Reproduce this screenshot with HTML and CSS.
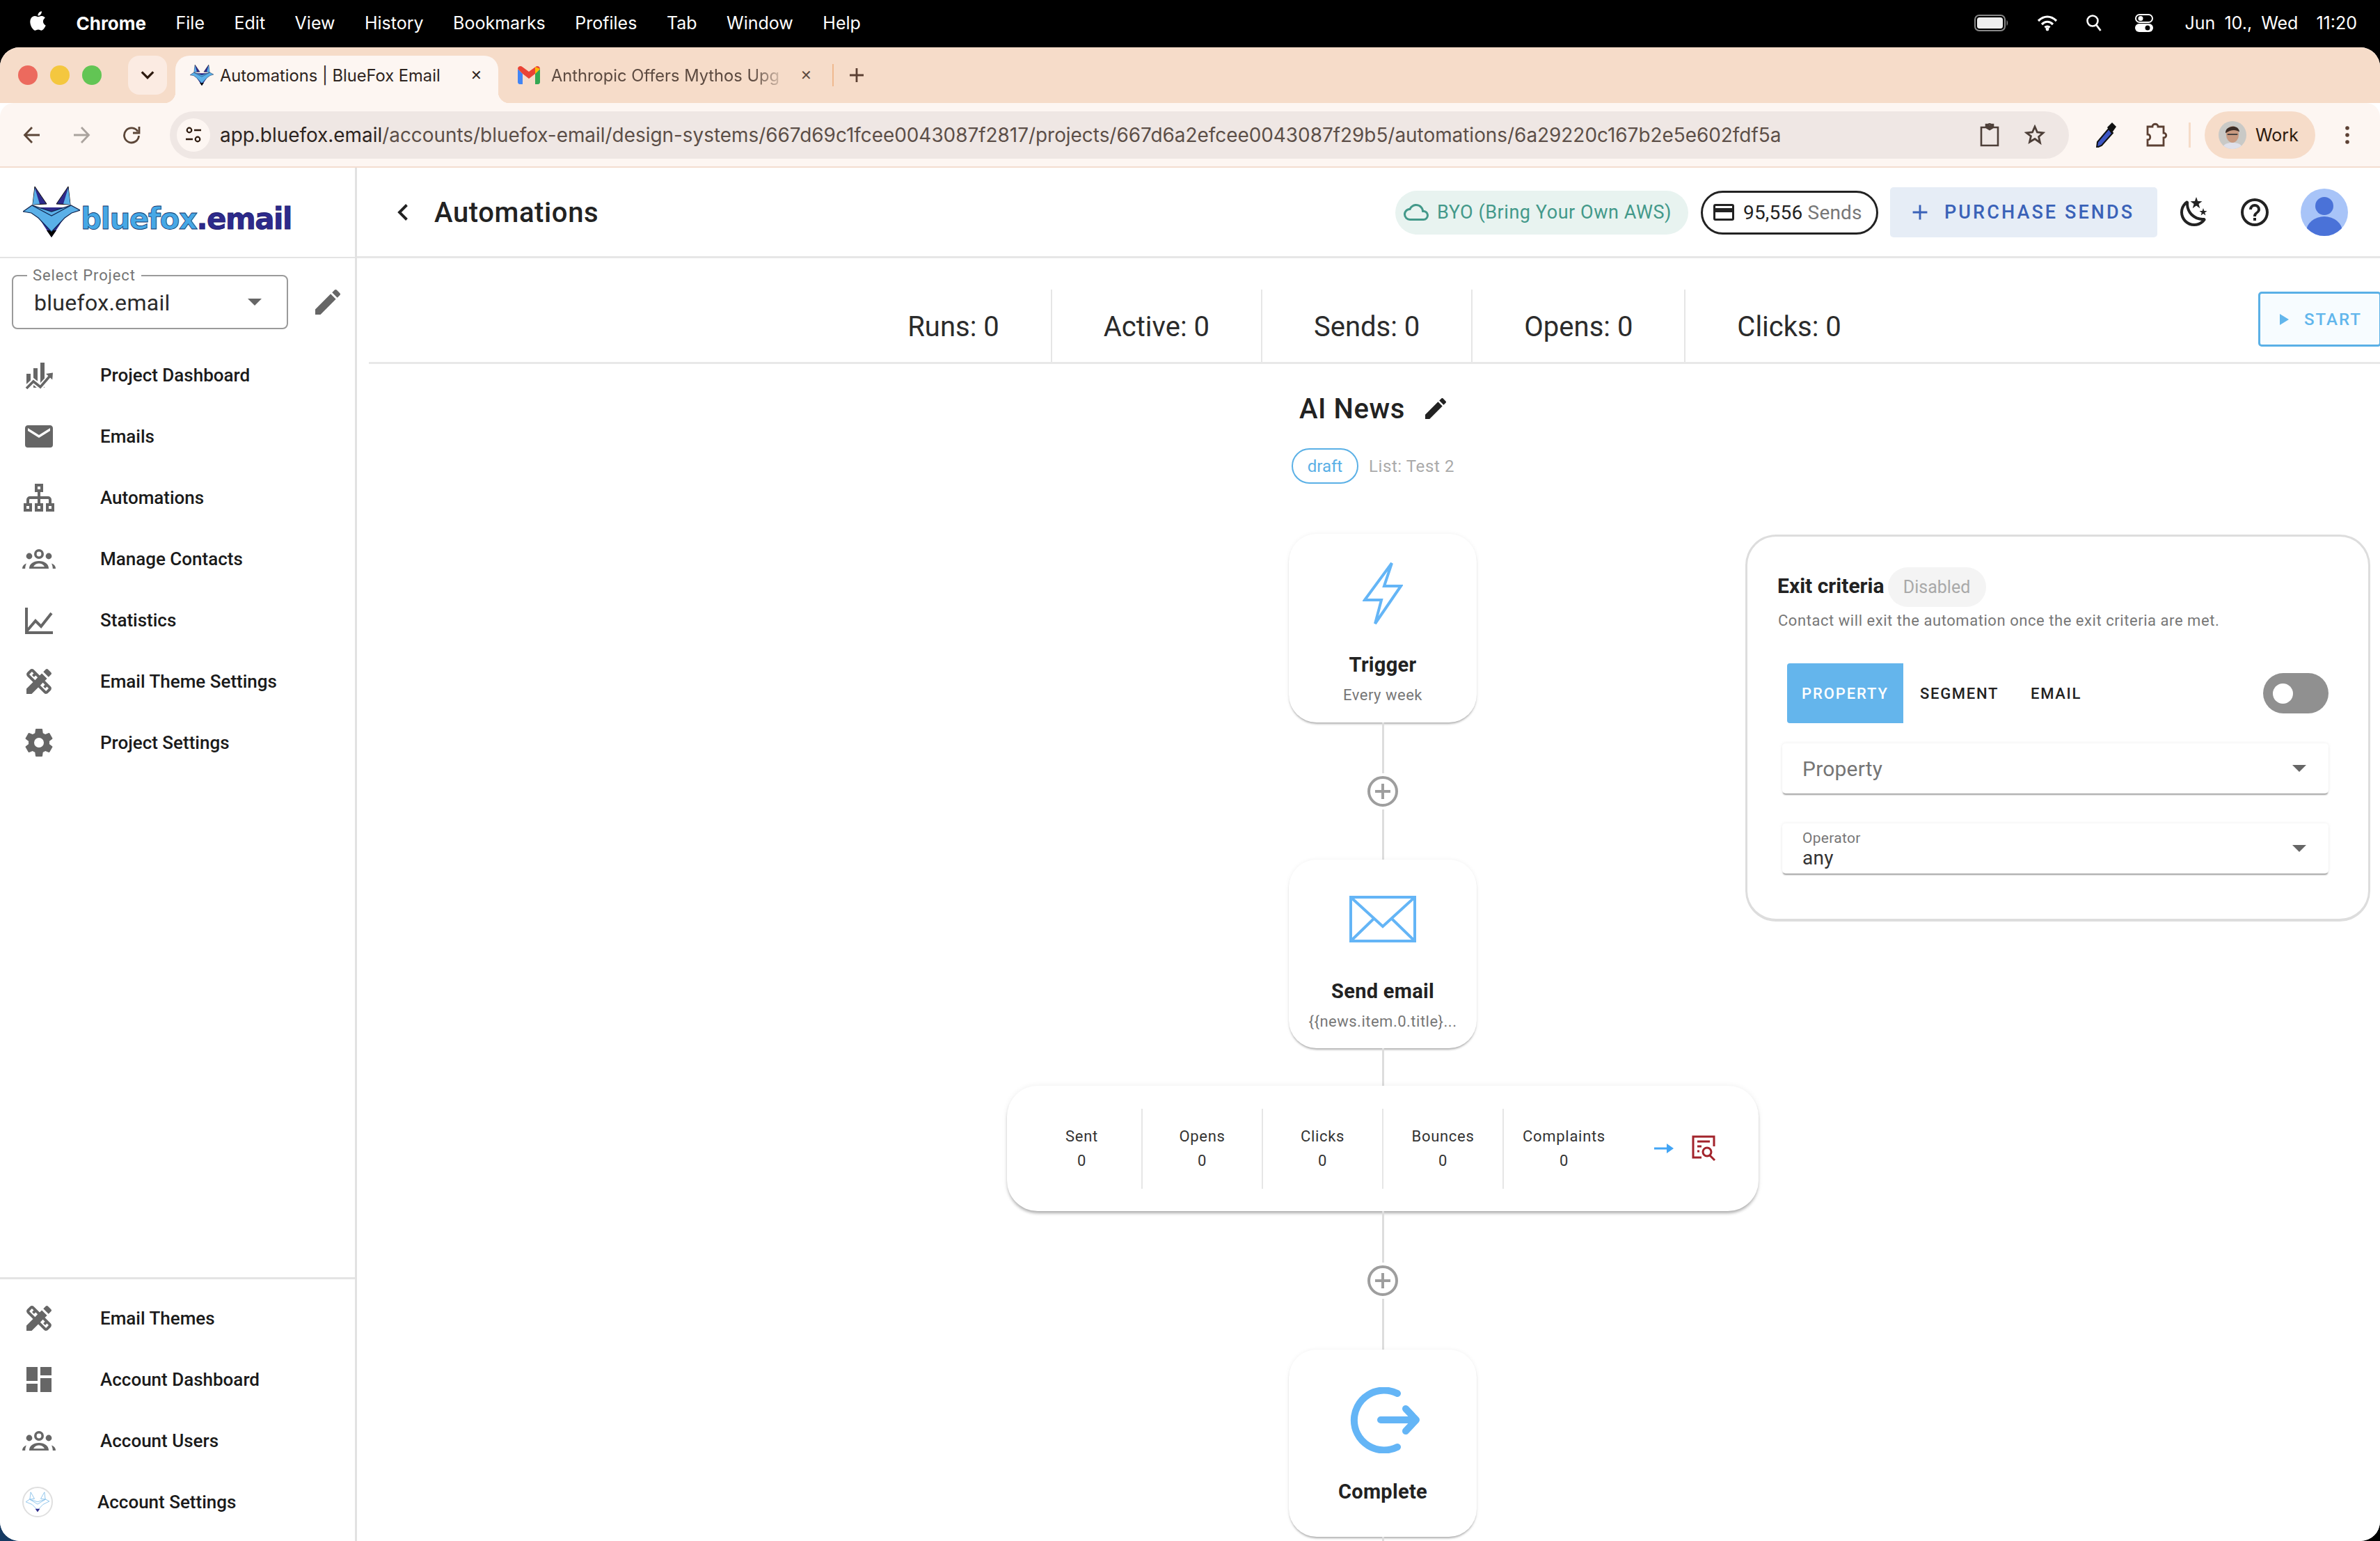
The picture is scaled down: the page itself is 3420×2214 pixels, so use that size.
FILE: index.html
```html
<!DOCTYPE html>
<html lang="en">
<head>
  <meta charset="UTF-8">
  <title>Automations | BlueFox Email</title>
  <link rel="stylesheet" href="styles.css">
</head>
<body>
  <svg class="defs" width="0" height="0">
    <symbol id="fox" viewBox="0 0 82 73">
      <polygon points="13,30 41,73 69,30" fill="#2d2a8c"/>
      <polygon points="34,63 41,73 48,63" fill="#000"/>
      <polygon points="17,0 34,25 14,26" fill="#2d2a8c" stroke="#111" stroke-width="1"/>
      <polygon points="65,0 48,25 68,26" fill="#2d2a8c" stroke="#111" stroke-width="1"/>
      <polygon points="17,2 14,26 24,25" fill="#5ab0e8"/>
      <polygon points="65,2 68,26 58,25" fill="#5ab0e8"/>
      <polygon points="0,36 13,27 41,36 69,27 82,34 70,38 60,45 41,65 22,45 12,38" fill="#5ab0e8" stroke="#10254f" stroke-width="1.2"/>
      <polyline points="13,27 41,42 69,27" fill="none" stroke="#10254f" stroke-width="1.2"/>
    </symbol>
    <symbol id="i-themes" viewBox="0 0 24 24"><path d="M16.24 11.51l1.57-1.57-3.75-3.75-1.57 1.57-4.14-4.13c-.78-.78-2.05-.78-2.83 0l-1.9 1.9c-.78.78-.78 2.05 0 2.83l4.13 4.13L3 17.25V21h3.75l4.76-4.76 4.13 4.13c.95.95 2.23.6 2.83 0l1.9-1.9c.78-.78.78-2.05 0-2.83l-4.13-4.13zm-7.06-.44L5.04 6.94l1.89-1.9L8.2 6.31 7.02 7.5l1.41 1.41 1.19-1.19 1.45 1.45-1.89 1.9zm7.88 7.89l-4.13-4.13 1.9-1.9 1.45 1.45-1.19 1.19 1.41 1.41 1.19-1.19 1.27 1.27-1.9 1.9zm3.65-11.92c.39-.39.39-1.02 0-1.41l-2.34-2.34c-.47-.47-1.12-.29-1.41 0l-1.83 1.83 3.75 3.75 1.83-1.83z"/></symbol>
    <symbol id="i-group" viewBox="0 0 24 24"><path fill-rule="evenodd" d="M12 5a3.5 3.5 0 1 1 0 7 3.5 3.5 0 0 1 0-7zm0 1.8a1.7 1.7 0 1 0 0 3.4 1.7 1.7 0 0 0 0-3.4zM5 7.800a2.200 2.200 0 1 1 0 4.400 2.200 2.200 0 0 1 0-4.400zm14 0a2.200 2.200 0 1 1 0 4.400 2.200 2.200 0 0 1 0-4.400zM5 19c0-3.500 3-5.500 7-5.500s7 2 7 5.500zm3-1.400h8c-1-1.700-2.500-2.300-4-2.300s-3 .6-4 2.300zM0 19c0-1.700 1-3 3-3.700-.5 1-.9 2.300-.9 3.700zm24 0c0-1.700-1-3-3-3.700.5 1 .9 2.300.9 3.700z"/></symbol>
    <symbol id="i-pencil" viewBox="0 0 24 24"><path d="M20.71,7.04C21.1,6.65 21.1,6 20.71,5.63L18.37,3.29C18,2.9 17.35,2.9 16.96,3.29L15.12,5.12L18.87,8.87M3,17.25V21H6.75L17.81,9.93L14.06,6.18L3,17.25Z"/></symbol>
    <symbol id="i-plus-circle" viewBox="0 0 44 44"><circle cx="22" cy="22" r="20" fill="#fff" stroke="#9e9e9e" stroke-width="4"/><path d="M22 11v22M11 22h22" stroke="#9e9e9e" stroke-width="4"/></symbol>
    <symbol id="i-caret" viewBox="0 0 20 10"><path d="M0 0h20L10 10z"/></symbol>
  </svg>

  <!-- macOS menu bar -->
  <div class="menubar">
    <svg class="apple" viewBox="0 0 24 24"><path d="M18.71 19.5c-.83 1.24-1.71 2.45-3.05 2.47-1.34.03-1.77-.79-3.29-.79-1.53 0-2 .77-3.27.82-1.31.05-2.3-1.32-3.14-2.53C4.25 17 2.94 12.45 4.7 9.39c.87-1.52 2.43-2.48 4.12-2.51 1.28-.02 2.5.87 3.29.87.78 0 2.26-1.07 3.81-.91.65.03 2.47.26 3.64 1.98-.09.06-2.17 1.28-2.15 3.81.03 3.02 2.65 4.03 2.68 4.04-.03.07-.42 1.44-1.38 2.83M13 3.5c.73-.83 1.94-1.46 2.94-1.5.13 1.17-.34 2.35-1.04 3.19-.69.85-1.83 1.51-2.95 1.42-.15-1.15.41-2.35 1.05-3.11z"/></svg>
    <span class="menu-app">Chrome</span>
    <span>File</span><span>Edit</span><span>View</span><span>History</span><span>Bookmarks</span><span>Profiles</span><span>Tab</span><span>Window</span><span>Help</span>
    <div class="menu-status">
      <svg class="st-battery" viewBox="0 0 50 24"><rect x="1" y="1" width="43" height="22" rx="6" fill="none" stroke="#888" stroke-width="2"/><rect x="4" y="4" width="37" height="16" rx="3.500" fill="#eee"/><path d="M46.500 8c2 1 2 7 0 8z" fill="#888"/></svg>
      <svg class="st-wifi" viewBox="0 0 30 24"><path d="M2 9c8-8 18-8 26 0M7 14c5-5 11-5 16 0M11.500 18.500c2-2 5-2 7 0" fill="none" stroke="#fff" stroke-width="3.200"/><circle cx="15" cy="21" r="2.400" fill="#fff"/></svg>
      <svg class="st-search" viewBox="0 0 24 26"><circle cx="10" cy="10" r="7.500" fill="none" stroke="#fff" stroke-width="2.600"/><path d="M15.500 16l6 8" stroke="#fff" stroke-width="2.800"/></svg>
      <svg class="st-control" viewBox="0 0 26 26"><rect x="1" y="1" width="24" height="11" rx="5.500" fill="none" stroke="#fff" stroke-width="2"/><circle cx="8" cy="6.500" r="3.500" fill="#fff"/><rect x="0" y="14" width="26" height="12" rx="6" fill="#fff"/><circle cx="18" cy="20" r="3.500" fill="#000"/></svg>
      <span class="clock">Jun 10., Wed&nbsp;&nbsp;11:20</span>
    </div>
  </div>

  <div class="window">
    <!-- Abas do navegador -->
    <div class="tabbar">
      <div class="lights"><i class="red"></i><i class="yellow"></i><i class="green"></i></div>
      <div class="tab-search"><svg viewBox="0 0 24 24"><path d="M3 7l9 9 9-9" fill="none" stroke="#2d1a0e" stroke-width="3.500"/></svg></div>
      <div class="tab tab-active">
        <svg class="fav"><use href="#fox"/></svg>
        <span class="tab-title">Automations | BlueFox Email</span>
        <span class="tab-x">✕</span>
      </div>
      <div class="tab tab-other">
        <svg class="fav-m" viewBox="0 0 32 26"><path d="M0 4v19c0 1.500 1 3 3 3h4V11z" fill="#4285f4"/><path d="M32 4v19c0 1.500-1 3-3 3h-4V11z" fill="#34a853"/><path d="M0 4c0-3.500 4-5 6.500-3L16 8l9.500-7C28 -1 32 .5 32 4l-7 7-9 7-9-7z" fill="#ea4335"/><path d="M25 1l7 3-7 7z" fill="#fbbc04"/></svg>
        <span class="tab-title tab-fade">Anthropic Offers Mythos Upg</span>
        <span class="tab-x">✕</span>
      </div>
      <div class="tab-sep"></div>
      <svg class="tab-plus" viewBox="0 0 22 22"><path d="M11 1v20M1 11h20" stroke="#5c4033" stroke-width="2.800"/></svg>
    </div>

    <div class="toolbar">
      <svg class="nav-ic back" viewBox="0 0 26 26"><path d="M24 13H3M13 2L2.500 13 13 24" fill="none" stroke="#5c4638" stroke-width="2.800"/></svg>
      <svg class="nav-ic fwd" viewBox="0 0 26 26"><path d="M2 13h21M13 2l10.500 11L13 24" fill="none" stroke="#aaa39e" stroke-width="2.800"/></svg>
      <svg class="nav-ic reload" viewBox="0 0 26 26"><path d="M22 8a10.500 10.500 0 1 0 1.500 6" fill="none" stroke="#5c4638" stroke-width="2.800"/><path d="M24 1v9h-9" fill="none" stroke="#5c4638" stroke-width="2.800"/></svg>
      <div class="omnibox">
        <div class="site-info"><svg viewBox="0 0 26 26"><circle cx="7" cy="6" r="3.300" fill="none" stroke="#2d1a0e" stroke-width="2.200"/><path d="M14 6h10M2 19h10" stroke="#2d1a0e" stroke-width="2.400"/><circle cx="19" cy="19" r="3.300" fill="none" stroke="#2d1a0e" stroke-width="2.200"/></svg></div>
        <span class="url"><b>app.bluefox.email</b>/accounts/bluefox-email/design-systems/667d69c1fcee0043087f2817/projects/667d6a2efcee0043087f29b5/automations/6a29220c167b2e5e602fdf5a</span>
        <svg class="omni-ic" viewBox="0 0 28 34"><path d="M2 6h24v26H2zM9 6V2h3l2-1 2 1h3v4l-5 3z" fill="none" stroke="#4d3f38" stroke-width="2.600"/><path d="M9 6V3h10v3l-5 4z" fill="#4d3f38"/></svg>
        <svg class="omni-ic star" viewBox="0 0 30 30"><path d="M15 3l3.500 8 8.500.8-6.400 5.700 1.900 8.500L15 20.500 7.500 25l1.900-8.500L3 11.800l8.500-.8z" fill="none" stroke="#4d3f38" stroke-width="2.800"/></svg>
      </div>
      <svg class="ext-pen" viewBox="0 0 30 36"><path d="M19 9l6 6L9 33l-7 3 1-8z" fill="#3d56c4" stroke="#111" stroke-width="2"/><path d="M17 7l7-7 6 6-7 10z" fill="#111"/></svg>
      <svg class="ext-puzzle" viewBox="0 0 32 36"><path d="M3 6h7c0-5 8-5 8 0h8v9c5 0 5 7 0 7v11H3v-8c5 0 5-8 0-8z" fill="none" stroke="#5c4033" stroke-width="2.800"/></svg>
      <div class="tool-sep"></div>
      <div class="profile">
        <svg class="photo" viewBox="0 0 44 44"><defs><clipPath id="ph"><circle cx="22" cy="22" r="22"/></clipPath></defs><g clip-path="url(#ph)"><rect width="44" height="44" fill="#c9c9c6"/><path d="M6 44c1-8 8-10 16-10s15 2 16 10z" fill="#dfe0ea"/><ellipse cx="22" cy="21" rx="10" ry="13" fill="#c99a80"/><path d="M11 19c-1-12 21-15 22-2-5-4-14-4-22 2z" fill="#3c2d26"/><path d="M14 21h16" stroke="#3a3a3a" stroke-width="2"/></g></svg>
        <span>Work</span>
      </div>
      <svg class="tool-dots" viewBox="0 0 6 26"><circle cx="3" cy="3" r="2.800"/><circle cx="3" cy="13" r="2.800"/><circle cx="3" cy="23" r="2.800"/></svg>
    </div>

    <div class="app">
      <!-- Barra lateral -->
      <aside class="sidebar">
        <div class="logo">
          <svg class="logo-fox"><use href="#fox"/></svg>
          <span class="logo-text">bluefox<em>.email</em></span>
        </div>
        <div class="project-row">
          <div class="project-select">
            <span class="legend">Select Project</span>
            <span class="project-value">bluefox.email</span>
            <svg class="caret"><use href="#i-caret"/></svg>
          </div>
          <svg class="project-edit"><use href="#i-pencil"/></svg>
        </div>
        <nav class="nav">
          <a class="nav-item"><svg viewBox="0 0 24 24"><path d="M3 11h3v10H3zM8 7h3v14H8zM13 3h3v18h-3z"/><path d="M1 23l7-6.500 5 4L20 13" fill="none" stroke="#fff" stroke-width="4"/><path d="M3 21.500l5-5 5 4 6.500-7.500" fill="none" stroke="#666" stroke-width="1.800"/><path d="M17 11l5-.8-.4 5z"/></svg>Project Dashboard</a>
          <a class="nav-item"><svg viewBox="0 0 24 24"><path d="M20,8L12,13L4,8V6L12,11L20,6M20,4H4C2.89,4 2,4.89 2,6V18A2,2 0 0,0 4,20H20A2,2 0 0,0 22,18V6C22,4.89 21.1,4 20,4Z"/></svg>Emails</a>
          <a class="nav-item"><svg viewBox="0 0 24 24"><g fill="none" stroke="#666" stroke-width="2"><rect x="10" y="3" width="4" height="4"/><rect x="2" y="17" width="4" height="4"/><rect x="10" y="17" width="4" height="4"/><rect x="18" y="17" width="4" height="4"/><path d="M12 8v8M4 16v-2.500a1.500 1.500 0 0 1 1.500-1.500h13a1.500 1.500 0 0 1 1.500 1.500V16"/></g></svg>Automations</a>
          <a class="nav-item"><svg><use href="#i-group"/></svg>Manage Contacts</a>
          <a class="nav-item"><svg viewBox="0 0 24 24"><path d="M3 3v18h19" fill="none" stroke="#666" stroke-width="2"/><path d="M3.500 19.500l6-7 4 4L21 7" fill="none" stroke="#666" stroke-width="2"/></svg>Statistics</a>
          <a class="nav-item"><svg><use href="#i-themes"/></svg>Email Theme Settings</a>
          <a class="nav-item"><svg viewBox="0 0 24 24"><path d="M12,15.5A3.5,3.5 0 0,1 8.5,12A3.5,3.5 0 0,1 12,8.5A3.5,3.5 0 0,1 15.5,12A3.5,3.5 0 0,1 12,15.5M19.43,12.97C19.47,12.65 19.5,12.33 19.5,12C19.5,11.67 19.47,11.34 19.43,11L21.54,9.37C21.73,9.22 21.78,8.95 21.66,8.73L19.66,5.27C19.54,5.05 19.27,4.96 19.05,5.05L16.56,6.05C16.04,5.66 15.5,5.32 14.87,5.07L14.5,2.42C14.46,2.18 14.25,2 14,2H10C9.75,2 9.54,2.18 9.5,2.42L9.13,5.07C8.5,5.32 7.96,5.66 7.44,6.05L4.95,5.05C4.73,4.96 4.46,5.05 4.34,5.27L2.34,8.73C2.21,8.95 2.27,9.22 2.46,9.37L4.57,11C4.53,11.34 4.5,11.67 4.5,12C4.5,12.33 4.53,12.65 4.57,12.97L2.46,14.63C2.27,14.78 2.21,15.05 2.34,15.27L4.34,18.73C4.46,18.95 4.73,19.03 4.95,18.95L7.44,17.94C7.96,18.34 8.5,18.68 9.13,18.93L9.5,21.58C9.54,21.82 9.75,22 10,22H14C14.25,22 14.46,21.82 14.5,21.58L14.87,18.93C15.5,18.67 16.04,18.34 16.56,17.94L19.05,18.95C19.27,19.03 19.54,18.95 19.66,18.73L21.66,15.27C21.78,15.05 21.73,14.78 21.54,14.63L19.43,12.97Z"/></svg>Project Settings</a>
        </nav>
        <nav class="nav nav-bottom">
          <a class="nav-item"><svg><use href="#i-themes"/></svg>Email Themes</a>
          <a class="nav-item"><svg viewBox="0 0 24 24"><path d="M3 13h8V3H3v10zm0 8h8v-6H3v6zm10 0h8V11h-8v10zm0-18v6h8V3h-8z"/></svg>Account Dashboard</a>
          <a class="nav-item"><svg><use href="#i-group"/></svg>Account Users</a>
          <a class="nav-item nav-account">
            <span class="account-ring"><svg viewBox="0 0 82 73"><g fill="none" stroke="#7dbbe8" stroke-width="2"><polygon points="17,2 30,25 14,27"/><polygon points="65,2 52,25 68,27"/><polygon points="0,36 13,27 41,36 69,27 82,34 60,45 41,65 22,45"/><polyline points="13,27 41,44 69,27"/></g><polygon points="33,60 41,72 49,60" fill="#2d2a8c"/></svg></span>
            Account Settings
          </a>
        </nav>
      </aside>

      <main class="main">
        <header class="topbar">
          <svg class="back-chev" viewBox="0 0 24 24"><path d="M15 5l-7 7 7 7" fill="none" stroke="#222" stroke-width="2.600"/></svg>
          <h1 class="page-title">Automations</h1>
          <div class="byo"><svg viewBox="0 0 24 24"><path d="M19,18H6A4,4 0 0,1 2,14A4,4 0 0,1 6,10H6.71C7.37,7.69 9.5,6 12,6A5.5,5.5 0 0,1 17.5,11.5V12H19A3,3 0 0,1 22,15A3,3 0 0,1 19,18M19.35,10.03C18.67,6.59 15.64,4 12,4C9.11,4 6.6,5.64 5.35,8.03C2.34,8.36 0,10.9 0,14A6,6 0 0,0 6,20H19A5,5 0 0,0 24,15C24,12.36 21.95,10.22 19.35,10.03Z"/></svg>BYO (Bring Your Own AWS)</div>
          <div class="sends"><svg viewBox="0 0 24 24"><path d="M20 4H4a2 2 0 0 0-2 2v12a2 2 0 0 0 2 2h16a2 2 0 0 0 2-2V6a2 2 0 0 0-2-2zm0 14H4v-6h16zm0-10H4V6h16z"/></svg><b>95,556</b>&nbsp;Sends</div>
          <div class="purchase"><svg viewBox="0 0 20 20"><path d="M10 2v16M2 10h16" stroke="#3a62b8" stroke-width="2.200"/></svg>PURCHASE SENDS</div>
          <svg class="top-ic moon" viewBox="0 0 24 24"><path d="M17.75,4.09L15.22,6.03L16.13,9.09L13.5,7.28L10.87,9.09L11.78,6.03L9.25,4.09L12.44,4L13.5,1L14.56,4L17.75,4.09M21.25,11L19.61,12.25L20.2,14.23L18.5,13.06L16.8,14.23L17.39,12.25L15.75,11L17.81,10.95L18.5,9L19.19,10.95L21.25,11M18.97,15.95C19.8,15.87 20.69,17.05 20.16,17.8C19.84,18.25 19.5,18.67 19.08,19.07C15.17,23 8.84,23 4.94,19.07C1.03,15.17 1.03,8.83 4.94,4.93C5.34,4.53 5.76,4.17 6.21,3.85C6.96,3.32 8.14,4.21 8.06,5.04C7.79,7.9 8.75,10.87 10.95,13.06C13.14,15.26 16.1,16.22 18.97,15.95M17.33,17.97C14.5,17.81 11.7,16.64 9.53,14.5C7.36,12.31 6.2,9.5 6.04,6.68C3.23,9.82 3.34,14.64 6.35,17.66C9.37,20.67 14.19,20.78 17.33,17.97Z"/></svg>
          <svg class="top-ic help" viewBox="0 0 24 24"><path d="M11,18H13V16H11V18M12,2A10,10 0 0,0 2,12A10,10 0 0,0 12,22A10,10 0 0,0 22,12A10,10 0 0,0 12,2M12,20C7.59,20 4,16.41 4,12C4,7.59 7.59,4 12,4C16.41,4 20,7.59 20,12C20,16.41 16.41,20 12,20M12,6A4,4 0 0,0 8,10H10A2,2 0 0,1 12,8A2,2 0 0,1 14,10C14,12 11,11.75 11,15H13C13,12.75 16,12.5 16,10A4,4 0 0,0 12,6Z"/></svg>
          <svg class="top-avatar" viewBox="0 0 68 68"><defs><clipPath id="av"><circle cx="34" cy="34" r="34"/></clipPath></defs><g clip-path="url(#av)"><rect width="68" height="68" fill="#a8c4f8"/><circle cx="34" cy="25" r="13" fill="#4a72d8"/><ellipse cx="34" cy="62" rx="26" ry="22" fill="#4a72d8"/></g></svg>
        </header>

        <div class="stats-row">
          <div></div>
          <div class="stats">
            <div class="stat">Runs: 0</div>
            <div class="stat">Active: 0</div>
            <div class="stat">Sends: 0</div>
            <div class="stat">Opens: 0</div>
            <div class="stat">Clicks: 0</div>
          </div>
          <div class="start"><i></i>START</div>
        </div>

        <section class="canvas">
          <div class="auto-title">AI News <svg><use href="#i-pencil"/></svg></div>
          <div class="auto-meta"><span class="draft">draft</span><span class="list-name">List: Test 2</span></div>

          <!-- Fluxo da automação -->
          <div class="flow">
            <div class="node">
              <svg class="node-ic bolt" viewBox="0 0 58 94"><path d="M42 3L3 56h24L18 90 55 36H31z" fill="none" stroke="#64b5f6" stroke-width="4" stroke-linejoin="miter"/></svg>
              <div class="node-title">Trigger</div>
              <div class="node-sub">Every week</div>
            </div>
            <div class="connector tall"><svg class="plus"><use href="#i-plus-circle"/></svg></div>
            <div class="node">
              <svg class="node-ic mail" viewBox="0 0 96 67"><path d="M2 2h92v63H2zM2 2l46 42L94 2M2 65l33-32M94 65L61 33" fill="none" stroke="#64b5f6" stroke-width="4"/></svg>
              <div class="node-title">Send email</div>
              <div class="node-sub">{{news.item.0.title}...</div>
            </div>
            <div class="connector short"></div>
            <div class="node-stats">
              <div class="ns-cell">Sent<span>0</span></div>
              <div class="ns-cell">Opens<span>0</span></div>
              <div class="ns-cell">Clicks<span>0</span></div>
              <div class="ns-cell">Bounces<span>0</span></div>
              <div class="ns-cell">Complaints<span>0</span></div>
              <svg class="ns-arrow" viewBox="0 0 28 16"><path d="M0 8h24" stroke="#42a5f5" stroke-width="3"/><path d="M18 1l10 7-10 7z" fill="#42a5f5"/></svg>
              <svg class="ns-report" viewBox="0 0 36 38"><g fill="none" stroke="#a2232b" stroke-width="3"><path d="M14 32H2V2h30v14"/><path d="M8 9h18M8 16h6M8 23h3"/><circle cx="22" cy="24" r="6"/><path d="M26 29l7 7"/></g></svg>
            </div>
            <div class="connector tall2"><svg class="plus"><use href="#i-plus-circle"/></svg></div>
            <div class="node node-last">
              <svg class="node-ic exit" viewBox="0 0 104 95"><path d="M72 9A43 43 0 1 0 72 86" fill="none" stroke="#64b5f6" stroke-width="10" stroke-linecap="round"/><path d="M48 47h50M84 31l15 16-15 16" fill="none" stroke="#64b5f6" stroke-width="10" stroke-linecap="round" stroke-linejoin="round"/></svg>
              <div class="node-title">Complete</div>
            </div>
            <div class="connector tail"></div>
          </div>
        </section>

        <!-- Painel flutuante -->
        <div class="exit-panel">
          <div class="exit-head"><span class="exit-title">Exit criteria</span><span class="exit-chip">Disabled</span></div>
          <p class="exit-desc">Contact will exit the automation once the exit criteria are met.</p>
          <div class="exit-tabs">
            <span class="exit-tab exit-tab-on">PROPERTY</span>
            <span class="exit-tab">SEGMENT</span>
            <span class="exit-tab">EMAIL</span>
            <span class="toggle"><i></i></span>
          </div>
          <div class="solo-select solo-first"><span class="solo-ph">Property</span><svg class="solo-caret"><use href="#i-caret"/></svg></div>
          <div class="solo-select solo-second"><span class="solo-stack"><small>Operator</small>any</span><svg class="solo-caret"><use href="#i-caret"/></svg></div>
        </div>
      </main>
    </div>
  </div>
</body>
</html>
```

FILE: styles.css
```css
* {
  box-sizing: border-box;
}
html, body {
  margin: 0;
  width: 3420px;
  height: 2214px;
  overflow: hidden;
}
body {
  font-family: Roboto, sans-serif;
  color: #1f1f1f;
  background: linear-gradient(90deg, #163a63 60px, #000 60px) left bottom / 100% 60px no-repeat, #000;
}
.defs {
  position: absolute;
}

/* Menu bar */
.menubar {
  height: 68px;
  background: #000;
  color: #fff;
  display: flex;
  align-items: center;
  gap: 42.5px;
  padding: 0 33px 2px 38px;
  font-family: Inter, sans-serif;
  font-size: 25px;
}
.apple {
  width: 33px;
  height: 36px;
  fill: #fff;
  margin-top: -6px;
  margin-right: -4px;
}
.menu-app {
  font-weight: 700;
  font-size: 26px;
}
.menu-status {
  margin-left: auto;
  display: flex;
  align-items: center;
}
.st-battery {
  width: 50px;
  height: 24px;
}
.st-wifi {
  width: 30px;
  height: 24px;
  margin-left: 40px;
}
.st-search {
  width: 24px;
  height: 26px;
  margin-left: 40px;
}
.st-control {
  width: 26px;
  height: 26px;
  margin-left: 47px;
  margin-right: 46px;
}
.clock {
  word-spacing: 6px;
}

/* Browser frame */
.window {
  height: 2146px;
  background: #fff;
  border-radius: 28px;
  overflow: hidden;
  display: flex;
  flex-direction: column;
}
.tabbar {
  height: 80px;
  background: #f6dcc9;
  display: flex;
  align-items: flex-start;
  padding-top: 12px;
  position: relative;
}
.lights {
  display: flex;
  gap: 18px;
  margin: 14px 0 0 26px;
}
.lights i {
  width: 28px;
  height: 28px;
  border-radius: 50%;
  display: block;
}
.red {
  background: #ec6a5e;
}
.yellow {
  background: #f4c73f;
}
.green {
  background: #62c554;
}
.tab-search {
  width: 56px;
  height: 56px;
  border-radius: 16px;
  background: #fbebe2;
  margin-left: 38px;
  display: flex;
  align-items: center;
  justify-content: center;
}
.tab-search svg {
  width: 22px;
  height: 22px;
}
.tab {
  height: 68px;
  display: flex;
  align-items: center;
  font-family: Inter, sans-serif;
  font-size: 23.7px;
  padding-bottom: 12px;
}
.tab-active {
  width: 464px;
  margin-left: 12px;
  padding-left: 20px;
  background: #fdf6f2;
  border-radius: 20px 20px 0 0;
  color: #2d2420;
  position: relative;
}
.tab-active::before,
.tab-active::after {
  content: "";
  position: absolute;
  bottom: 0;
  width: 16px;
  height: 16px;
}
.tab-active::before {
  left: -16px;
  background: radial-gradient(circle at 0 0, transparent 16px, #fdf6f2 16.5px);
}
.tab-active::after {
  right: -16px;
  background: radial-gradient(circle at 100% 0, transparent 16px, #fdf6f2 16.5px);
}
.tab-other {
  color: #5c4a40;
  width: 474px;
  padding-left: 28px;
}
.fav {
  width: 36px;
  height: 30px;
  margin-right: 8px;
}
.tab-active .tab-title {
  width: 352px;
  white-space: nowrap;
}
.tab-x {
  font-size: 20px;
  margin-left: 8px;
}
.fav-m {
  width: 32px;
  height: 26px;
  margin-right: 16px;
}
.tab-fade {
  width: 340px;
  white-space: nowrap;
  -webkit-mask-image: linear-gradient(90deg, #000 85%, transparent);
  mask-image: linear-gradient(90deg, #000 85%, transparent);
}
.tab-other .tab-x {
  margin-left: 18px;
}
.tab-sep {
  width: 2px;
  height: 32px;
  background: #efb98f;
  margin: 12px 0 0 6px;
}
.tab-plus {
  width: 22px;
  height: 22px;
  margin: 17px 0 0 22px;
}
.toolbar {
  height: 93px;
  background: #fdf6f2;
  border-radius: 20px 20px 0 0;
  border-bottom: 2px solid #f3ddd0;
  display: flex;
  align-items: center;
  flex-shrink: 0;
}
.nav-ic {
  width: 26px;
  height: 26px;
  flex-shrink: 0;
}
.back {
  margin-left: 33px;
}
.fwd {
  margin-left: 45px;
}
.reload {
  margin-left: 46px;
}
.omnibox {
  margin-left: 42px;
  width: 2729px;
  height: 68px;
  border-radius: 34px;
  background: #efe7e4;
  display: flex;
  align-items: center;
  padding-left: 10px;
}
.site-info {
  width: 48px;
  height: 48px;
  border-radius: 50%;
  background: #fdf6f2;
  display: flex;
  align-items: center;
  justify-content: center;
}
.site-info svg {
  width: 26px;
  height: 26px;
}
.url {
  margin-left: 14px;
  font-family: Inter, sans-serif;
  font-size: 27.9px;
  color: #5c4f48;
  white-space: nowrap;
  width: 2505px;
}
.url b {
  font-weight: 400;
  color: #2d2420;
}
.omni-ic {
  width: 28px;
  height: 34px;
  flex-shrink: 0;
  margin-left: 24px;
}
.omni-ic.star {
  width: 30px;
  height: 30px;
  margin-left: 36px;
}
.ext-pen {
  width: 30px;
  height: 36px;
  margin-left: 38px;
  flex-shrink: 0;
}
.ext-puzzle {
  width: 32px;
  height: 36px;
  margin-left: 42px;
  flex-shrink: 0;
}
.tool-sep {
  width: 3px;
  height: 36px;
  background: #f6dcc9;
  margin-left: 30px;
  flex-shrink: 0;
}
.profile {
  margin-left: 20px;
  width: 159px;
  height: 68px;
  border-radius: 34px;
  background: #f6dcc9;
  display: flex;
  align-items: center;
  padding-left: 20px;
  font-family: Inter, sans-serif;
  font-size: 25px;
  color: #2d1a0e;
  flex-shrink: 0;
}
.photo {
  width: 40px;
  height: 44px;
  margin-right: 13px;
}
.tool-dots {
  width: 6px;
  height: 26px;
  margin-left: 43px;
  fill: #5c4033;
  flex-shrink: 0;
}

/* App */
.app {
  flex: 1;
  display: flex;
  min-height: 0;
  background: #fff;
}
.sidebar {
  width: 513px;
  flex-shrink: 0;
  border-right: 3px solid #e2e2e2;
  display: flex;
  flex-direction: column;
}
.logo {
  height: 130px;
  border-bottom: 2px solid #e4e4e4;
  display: flex;
  align-items: flex-start;
  padding: 27px 0 0 33px;
  flex-shrink: 0;
}
.logo-fox {
  width: 82px;
  height: 73px;
}
.logo-text {
  font-family: "DejaVu Sans", sans-serif;
  font-weight: 700;
  font-size: 42px;
  letter-spacing: -1.5px;
  line-height: 48px;
  color: #46a8e6;
  -webkit-text-stroke: .8px #123a70;
  margin: 23px 0 0 1px;
}
.logo-text em {
  font-style: normal;
  color: #2d2a8c;
  -webkit-text-stroke: .8px #1e1a6e;
}
.project-row {
  display: flex;
  align-items: center;
  margin: 24px 0 0 17px;
}
.project-select {
  width: 397px;
  height: 78px;
  border: 2px solid #9a9a9a;
  border-radius: 8px;
  display: flex;
  align-items: center;
  padding: 0 36px 0 30px;
  position: relative;
}
.legend {
  position: absolute;
  left: 20px;
  top: -14px;
  background: #fff;
  padding: 0 8px;
  font-size: 22px;
  line-height: 26px;
  color: #757575;
  letter-spacing: .9px;
}
.project-value {
  flex: 1;
  font-size: 32px;
  letter-spacing: .3px;
  color: #2b2b2b;
  padding-top: 2px;
}
.caret {
  width: 20px;
  height: 10px;
  fill: #666;
}
.project-edit {
  width: 48px;
  height: 48px;
  fill: #666;
  margin-left: 33px;
}
.nav {
  margin-top: 22px;
  display: flex;
  flex-direction: column;
}
.nav-bottom {
  margin-top: auto;
  border-top: 3px solid #e4e4e4;
  padding: 12px 0 12px;
}
.nav-item {
  height: 88px;
  display: flex;
  align-items: center;
  padding-left: 32px;
  font-size: 26px;
  font-weight: 500;
  color: #1a1a1a;
}
.nav-item svg {
  width: 48px;
  height: 48px;
  fill: #666;
  margin-right: 64px;
  flex-shrink: 0;
}
.account-ring {
  width: 44px;
  height: 44px;
  border-radius: 50%;
  border: 2px solid #dfdfdf;
  display: flex;
  align-items: center;
  justify-content: center;
  margin-right: 64px;
}
.nav-item .account-ring svg {
  width: 34px;
  height: 30px;
  margin: 0;
}

/* Main */
.main {
  flex: 1;
  position: relative;
  overflow: hidden;
  display: flex;
  flex-direction: column;
  min-width: 0;
}
.topbar {
  height: 130px;
  border-bottom: 3px solid #e6e6e6;
  display: flex;
  align-items: center;
  flex-shrink: 0;
  padding-top: 1px;
}
.back-chev {
  width: 36px;
  height: 36px;
  margin-left: 49px;
}
.page-title {
  margin: 0 0 0 26px;
  font-size: 40px;
  font-weight: 500;
  letter-spacing: .6px;
  color: #222;
  flex: 1;
}
.byo {
  height: 63px;
  width: 421px;
  border-radius: 32px;
  background: #e8f3f0;
  color: #43998a;
  font-size: 27px;
  display: flex;
  align-items: center;
  padding-left: 12px;
  letter-spacing: .55px;
}
.byo svg {
  width: 36px;
  height: 36px;
  fill: #43998a;
  margin-right: 12px;
}
.sends {
  height: 63px;
  width: 255px;
  margin-left: 18px;
  border: 3px solid #222;
  border-radius: 32px;
  display: flex;
  align-items: center;
  padding-left: 12px;
  font-size: 28px;
  letter-spacing: .2px;
  color: #777;
}
.sends b {
  font-weight: 400;
  color: #222;
}
.sends svg {
  width: 36px;
  height: 36px;
  fill: #222;
  margin-right: 10px;
}
.purchase {
  height: 72px;
  width: 384px;
  margin-left: 17px;
  background: #e6edf6;
  border-radius: 5px;
  color: #3a62b8;
  font-size: 27px;
  font-weight: 500;
  letter-spacing: 3.1px;
  display: flex;
  align-items: center;
  padding-left: 30px;
}
.purchase svg {
  width: 26px;
  height: 26px;
  margin-right: 22px;
}
.top-ic {
  width: 48px;
  height: 48px;
  fill: #222;
}
.moon {
  margin-left: 29px;
}
.help {
  margin-left: 39px;
}
.top-avatar {
  width: 68px;
  height: 68px;
  margin: 0 46px 0 42px;
}
.stats-row {
  height: 152px;
  margin-left: 17px;
  border-bottom: 3px solid #e8e8e8;
  display: grid;
  grid-template-columns: 1fr auto 1fr;
  flex-shrink: 0;
}
.stats {
  display: flex;
  align-self: end;
}
.stat {
  height: 104px;
  padding: 2px 74px 0;
  font-size: 40px;
  color: #2b2b2b;
  display: flex;
  align-items: center;
  border-right: 2px solid #e6e6e6;
}
.stat:last-child {
  border-right: 0;
}
.start {
  justify-self: end;
  align-self: start;
  margin: 48px -2px 0 0;
  width: 177px;
  height: 79px;
  border: 3px solid #5ab0e6;
  border-radius: 5px;
  background: #f7fcff;
  color: #62b6ec;
  font-size: 24px;
  font-weight: 500;
  letter-spacing: 2px;
  display: flex;
  align-items: center;
  padding-left: 28px;
}
.start i {
  width: 0;
  height: 0;
  border-left: 13px solid #62b6ec;
  border-top: 8px solid transparent;
  border-bottom: 8px solid transparent;
  margin-right: 22px;
}
.canvas {
  margin-left: 17px;
  display: flex;
  flex-direction: column;
  align-items: center;
}
.auto-title {
  margin-top: 40px;
  height: 48px;
  display: flex;
  align-items: center;
  font-size: 40px;
  font-weight: 500;
  letter-spacing: .6px;
  color: #222;
}
.auto-title svg {
  width: 40px;
  height: 40px;
  fill: #222;
  margin-left: 24px;
}
.auto-meta {
  margin: 33px 0 0 -4px;
  height: 51px;
  display: flex;
  align-items: center;
}
.draft {
  height: 51px;
  width: 96px;
  border: 2px solid #5ab0e6;
  border-radius: 26px;
  color: #5ab0e6;
  font-size: 24px;
  display: flex;
  align-items: center;
  justify-content: center;
}
.list-name {
  margin-left: 15px;
  color: #aaa;
  font-size: 24px;
  letter-spacing: .6px;
}
.flow {
  margin-top: 72px;
  padding-left: 24px;
  display: flex;
  flex-direction: column;
  align-items: center;
}
.node {
  width: 270px;
  height: 271px;
  border-radius: 40px;
  background: #fff;
  box-shadow: 0 3px 3px -1px rgba(0,0,0,.3), 0 0 6px rgba(0,0,0,.06);
  display: flex;
  flex-direction: column;
  align-items: center;
  flex-shrink: 0;
}
.node-ic {
  flex-shrink: 0;
}
.bolt {
  width: 58px;
  height: 94px;
  margin-top: 39px;
}
.mail {
  width: 96px;
  height: 67px;
  margin-top: 52px;
}
.exit {
  width: 104px;
  height: 95px;
  margin: 54px 0 0 2px;
}
.node-title {
  font-size: 29px;
  font-weight: 700;
  color: #222;
  line-height: 40px;
  letter-spacing: .3px;
}
.bolt + .node-title {
  margin-top: 35px;
}
.mail + .node-title {
  margin-top: 50px;
}
.exit + .node-title {
  margin-top: 35px;
}
.node-last {
  height: 269px;
}
.node-sub {
  font-size: 22px;
  color: #777;
  letter-spacing: .5px;
  margin-top: 9px;
  line-height: 30px;
}
.connector {
  width: 60px;
  display: flex;
  align-items: center;
  justify-content: center;
  background: linear-gradient(#ddd, #ddd) center / 3px 100% no-repeat;
  flex-shrink: 0;
}
.tall {
  height: 197px;
}
.short {
  height: 54px;
}
.tall2 {
  height: 199px;
}
.tail {
  height: 10px;
}
.plus {
  width: 44px;
  height: 44px;
  box-sizing: content-box;
  background: #fff;
  padding: 4px 0;
}
.node-stats {
  width: 1080px;
  height: 180px;
  flex-shrink: 0;
  border-radius: 44px;
  background: #fff;
  box-shadow: 0 4px 4px -1px rgba(0,0,0,.3), 0 0 8px rgba(0,0,0,.07);
  display: flex;
  align-items: center;
  padding-left: 22px;
}
.ns-cell {
  width: 173px;
  height: 115px;
  border-right: 2px solid #e6e6e6;
  display: flex;
  flex-direction: column;
  align-items: center;
  justify-content: center;
  gap: 11px;
  font-size: 22px;
  line-height: 24px;
  color: #333;
  letter-spacing: .7px;
}
.ns-cell:nth-child(5) {
  border-right: 0;
}
.ns-arrow {
  width: 28px;
  height: 16px;
  margin-left: 43px;
}
.ns-report {
  width: 36px;
  height: 38px;
  margin-left: 26px;
}

/* Exit criteria */
.exit-panel {
  position: absolute;
  top: 527px;
  right: 14px;
  width: 898px;
  height: 556px;
  background: #fff;
  border: 3px solid #ddd;
  border-bottom-width: 4px;
  border-radius: 44px;
  padding: 44px 57px 0 44px;
}
.exit-head {
  display: flex;
  align-items: center;
  height: 57px;
}
.exit-title {
  font-size: 30px;
  font-weight: 700;
  color: #222;
  margin: -5px 5px 0 -1px;
}
.exit-chip {
  height: 57px;
  width: 141px;
  border-radius: 29px;
  background: #f4f4f4;
  color: #a9a9a9;
  font-size: 25px;
  display: flex;
  align-items: center;
  justify-content: center;
}
.exit-desc {
  margin: 5px 0 0;
  font-size: 22px;
  line-height: 30px;
  color: #777;
  letter-spacing: .55px;
  white-space: nowrap;
}
.exit-tabs {
  margin: 46px 0 0 13px;
  height: 86px;
  display: flex;
  align-items: center;
  font-size: 22px;
  font-weight: 500;
  letter-spacing: 1.7px;
}
.exit-tab {
  height: 86px;
  padding: 0 22px 0 24px;
  display: flex;
  align-items: center;
  color: #222;
}
.exit-tab-on {
  width: 167px;
  justify-content: center;
  padding: 0;
  background: #64b5ec;
  color: #fff;
  border-radius: 4px 0 0 4px;
  letter-spacing: 1.9px;
}
.toggle {
  margin-left: auto;
  width: 94px;
  height: 58px;
  border-radius: 29px;
  background: #909090;
  display: flex;
  align-items: center;
  padding-left: 14px;
}
.toggle i {
  width: 29px;
  height: 29px;
  border-radius: 50%;
  background: #fff;
}
.solo-select {
  margin-left: 6px;
  height: 72px;
  border-radius: 5px;
  background: #fff;
  box-shadow: 0 3px 2px -1px rgba(0,0,0,.35), 0 0 5px rgba(0,0,0,.08);
  display: flex;
  align-items: center;
  padding: 0 32px 0 29px;
  justify-content: space-between;
}
.solo-first {
  margin-top: 29px;
}
.solo-second {
  margin-top: 43px;
}
.solo-ph {
  font-size: 30px;
  color: #757575;
  letter-spacing: .2px;
}
.solo-stack {
  display: flex;
  flex-direction: column;
  font-size: 28px;
  line-height: 31px;
  color: #333;
  letter-spacing: .3px;
}
.solo-stack small {
  font-size: 21px;
  line-height: 26px;
  color: #777;
}
.solo-caret {
  width: 20px;
  height: 10px;
  fill: #666;
}
```
